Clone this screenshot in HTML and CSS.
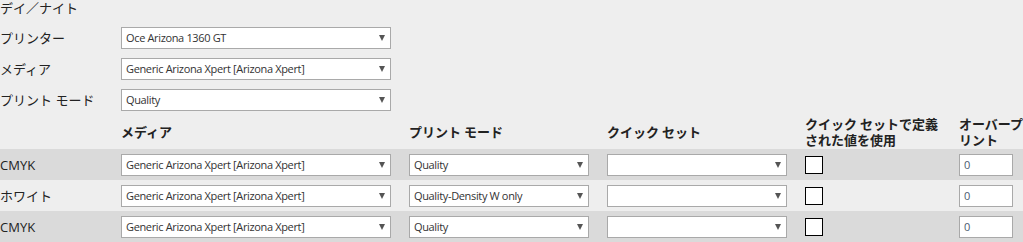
FILE: index.html
```html
<!DOCTYPE html>
<html lang="ja">
<head>
<meta charset="utf-8">
<link rel="stylesheet" href="styles.css">
</head>
<body>
<div class="page">
  <div class="title">デイ／ナイト</div>

  <div class="field">
    <span class="label">プリンター</span>
    <div class="select w-main"><span class="val">Oce Arizona 1360 GT</span><span class="arrow"></span></div>
  </div>
  <div class="field">
    <span class="label">メディア</span>
    <div class="select w-main"><span class="val">Generic Arizona Xpert [Arizona Xpert]</span><span class="arrow"></span></div>
  </div>
  <div class="field">
    <span class="label">プリント モード</span>
    <div class="select w-main"><span class="val">Quality</span><span class="arrow"></span></div>
  </div>

  <div class="grid head">
    <div></div>
    <div class="th">メディア</div>
    <div class="th">プリント モード</div>
    <div class="th">クイック セット</div>
    <div class="th two">クイック セットで定義<br>された値を使用</div>
    <div class="th two">オーバープ<br>リント</div>
  </div>

  <div class="grid row dark">
    <div class="label">CMYK</div>
    <div><div class="select w-main"><span class="val">Generic Arizona Xpert [Arizona Xpert]</span><span class="arrow"></span></div></div>
    <div><div class="select w-mid"><span class="val">Quality</span><span class="arrow"></span></div></div>
    <div><div class="select w-mid"><span class="val"></span><span class="arrow"></span></div></div>
    <div><span class="check"></span></div>
    <div><div class="num">0</div></div>
  </div>
  <div class="grid row">
    <div class="label">ホワイト</div>
    <div><div class="select w-main"><span class="val">Generic Arizona Xpert [Arizona Xpert]</span><span class="arrow"></span></div></div>
    <div><div class="select w-mid"><span class="val">Quality-Density W only</span><span class="arrow"></span></div></div>
    <div><div class="select w-mid"><span class="val"></span><span class="arrow"></span></div></div>
    <div><span class="check"></span></div>
    <div><div class="num">0</div></div>
  </div>
  <div class="grid row dark">
    <div class="label">CMYK</div>
    <div><div class="select w-main"><span class="val">Generic Arizona Xpert [Arizona Xpert]</span><span class="arrow"></span></div></div>
    <div><div class="select w-mid"><span class="val">Quality</span><span class="arrow"></span></div></div>
    <div><div class="select w-mid"><span class="val"></span><span class="arrow"></span></div></div>
    <div><span class="check"></span></div>
    <div><div class="num">0</div></div>
  </div>
</div>
</body>
</html>
```

FILE: styles.css
```css
html, body {
  margin: 0;
  padding: 0;
}
body {
  background: #eeeeee;
  font-family: "Open Sans", "Noto Sans CJK JP", sans-serif;
  font-size: 13px;
  color: #222222;
  overflow: hidden;
}
.page {
  width: 1023px;
}
.title {
  height: 22px;
  line-height: 15px;
  box-sizing: border-box;
  font-family: "Noto Sans CJK JP", sans-serif;
}
.field {
  display: flex;
  align-items: center;
  height: 31px;
}
.field .label {
  width: 121px;
  flex: none;
}
.label {
  font-family: "Open Sans", "Noto Sans CJK JP", sans-serif;
  white-space: nowrap;
}
.select {
  box-sizing: border-box;
  height: 22px;
  background: #ffffff;
  border: 1px solid #a9a9a9;
  display: flex;
  align-items: center;
  justify-content: space-between;
  padding: 0 5px 0 4px;
  font-family: "Open Sans", sans-serif;
  font-size: 11px;
  letter-spacing: -0.35px;
  color: #333333;
  white-space: nowrap;
  overflow: hidden;
}
.w-main {
  width: 270px;
}
.w-mid {
  width: 180px;
}
.arrow {
  flex: none;
  width: 0;
  height: 0;
  border-left: 3px solid transparent;
  border-right: 3px solid transparent;
  border-top: 6px solid #555555;
  margin-top: 1px;
}
.grid {
  display: grid;
  grid-template-columns: 121px 288px 198px 198px 154px 1fr;
  align-items: center;
}
.head {
  height: 34px;
}
.th {
  font-family: "Noto Sans CJK JP", sans-serif;
  font-weight: bold;
  white-space: nowrap;
  line-height: 16px;
}
.row {
  height: 31px;
}
.dark {
  background: #dadada;
}
.check {
  display: block;
  box-sizing: border-box;
  width: 18px;
  height: 18px;
  background: #ffffff;
  border: 1px solid #000000;
}
.num {
  box-sizing: border-box;
  width: 54px;
  height: 22px;
  background: #ffffff;
  border: 1px solid #a9a9a9;
  padding: 0 4px;
  display: flex;
  align-items: center;
  font-family: "Open Sans", sans-serif;
  font-size: 11px;
  color: #4a5a70;
}
```
